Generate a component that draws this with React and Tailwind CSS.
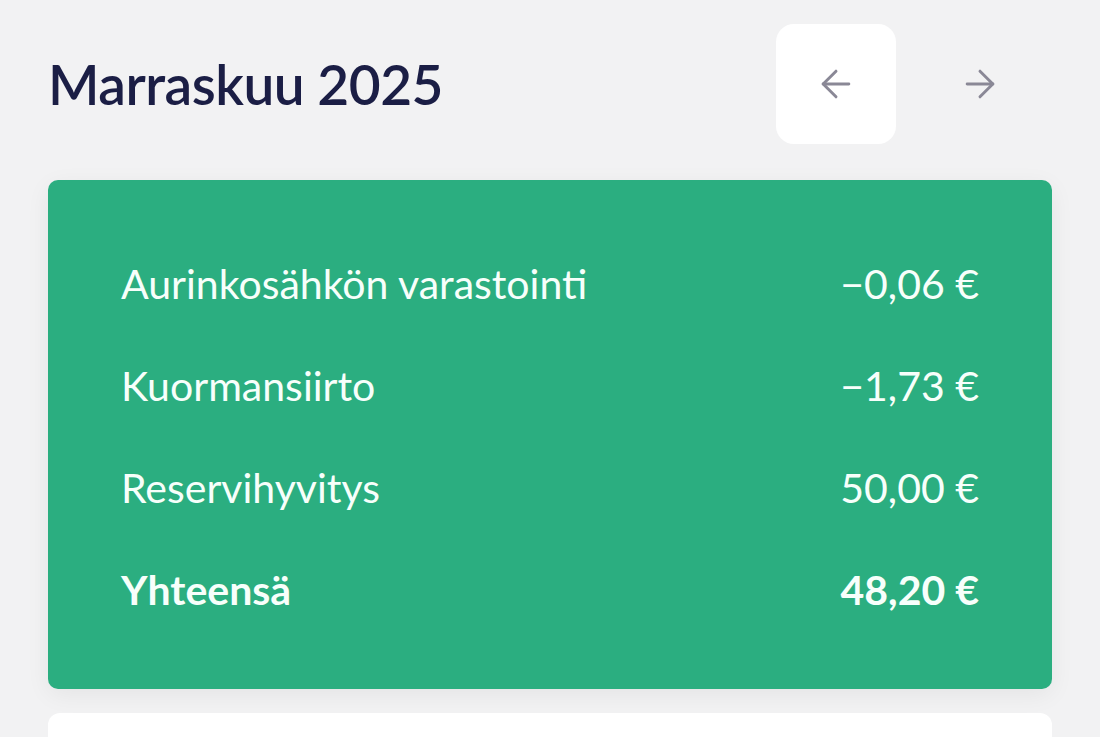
import { ArrowLeft, ArrowRight } from 'lucide-react';

const rows = [
  { label: 'Aurinkosähkön varastointi', value: '−0,06 €' },
  { label: 'Kuormansiirto', value: '−1,73 €' },
  { label: 'Reservihyvitys', value: '50,00 €' },
  { label: 'Yhteensä', value: '48,20 €', total: true },
];

export default function App() {
  return (
    <div
      className="bg-[#f2f2f3] px-[48px] pt-[24px] overflow-hidden h-[737px]"
      style={{ fontFamily: 'Lato, "Open Sans", sans-serif' }}
    >
      <div className="flex items-center justify-between">
        <h1 className="text-[55px] leading-none font-semibold text-[#1b1e45] tracking-[-0.5px]">Marraskuu 2025</h1>
        <div className="flex items-center gap-[24px] mr-[12px]">
          <button className="w-[120px] h-[120px] rounded-[18px] bg-white flex items-center justify-center text-[#8a8896]">
            <ArrowLeft size={44} strokeWidth={1.6} />
          </button>
          <button className="w-[120px] h-[120px] rounded-[18px] flex items-center justify-center text-[#8a8896]">
            <ArrowRight size={44} strokeWidth={1.6} />
          </button>
        </div>
      </div>

      <div className="mt-[36px] bg-[#2bae80] rounded-[10px] shadow-[0_6px_24px_rgba(0,0,0,0.06)] px-[73px] pt-[53px] pb-[48px] text-[#f7fffb]">
        {rows.map(row => (
          <div key={row.label} className="h-[102px] flex items-center justify-between">
            <span className={'text-[41px] ' + (row.total ? 'font-bold' : 'font-normal')}>{row.label}</span>
            <span className={'text-[41px] ' + (row.total ? 'font-bold' : 'font-normal')}>{row.value}</span>
          </div>
        ))}
      </div>

      <div className="mt-[24px] bg-white rounded-[12px] h-[120px]" />
    </div>
  );
}
